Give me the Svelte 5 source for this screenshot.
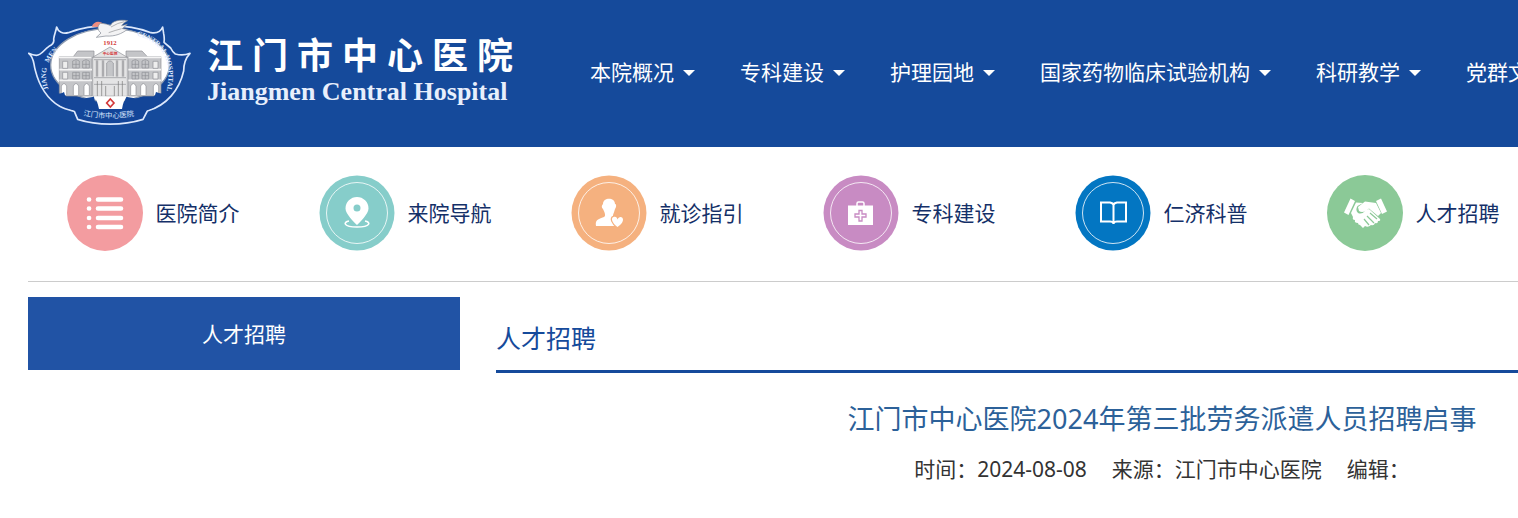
<script lang="ts">
    const nav = ['本院概况', '专科建设', '护理园地', '国家药物临床试验机构', '科研教学', '党群文化'];

    const links = [
        { icon: 'list', label: '医院简介', color: '#f39ca0' },
        { icon: 'pin', label: '来院导航', color: '#86cdca' },
        { icon: 'person', label: '就诊指引', color: '#f5b17f' },
        { icon: 'kit', label: '专科建设', color: '#c88bc3' },
        { icon: 'book', label: '仁济科普', color: '#0376c2' },
        { icon: 'hands', label: '人才招聘', color: '#8bc997' }
    ];

    const wings = [118, 325];
    const windows = [158, 188, 336, 366];
    const arches = [124, 160, 192, 332, 362, 400];
</script>

<div class="page">
    <header>
        <div class="container bar">
            <a class="logo" href="/">
                <svg class="emblem" viewBox="24 24 492 318" aria-hidden="true">
                    <path d="M110 48C108 60 103 70 101 84Q104 98 87 106C71 116 66 132 49 133Q39 133 26 127C43 139 40 158 46 178C58 226 83 264 119 286C135 295 151 298 163 301L173 325C232 344 309 344 369 325L382 300C441 283 478 236 491 180C491 161 497 141 510 127C493 134 480 133 466 129Q458 124 452 111L432 94Q434 82 431 68L428 48C422 62 409 68 393 65C320 37 218 37 145 65C129 70 114 62 110 48Z" fill="#134598" stroke="#dce8fc" stroke-width="5" stroke-linejoin="round" />
                    <ellipse cx="270" cy="162" rx="178" ry="110" fill="#fff" stroke="#8f9cb0" stroke-width="4" />
                    <g fill="#c4c5c8" stroke="#8e9095" stroke-width="2">
                        <path d="M160 137L173 120H222V138ZM318 138V120H366L382 137Z" />
                        {#each wings as x}
                            <path d={`M${x} 137h98v118h-98z`} />
                            <path d={`M${x - 2} 139h102M${x} 176h98M${x} 208h98`} stroke="#f4f4f4" stroke-width="5" />
                        {/each}
                        <path d="M218 139L270 108L322 139V256H218Z" fill="#e4e4e5" />
                        <path d="M214 139H326M222 146H318M222 200H318M222 220H318" />
                        {#each [229, 247, 289, 307] as x}
                            <path d={`M${x} 148v49m4-49v49`} stroke="#7d7f84" />
                        {/each}
                        <path d="M260 196V156Q270 143 280 156V196" />
                        {#each windows as x}
                            <path d={`M${x} 171v-21q10-9 20 0v21zM${x} 204v-20h20v20zM${x + 10} 148v23m0 13v20M${x} 160h20m-20 34h20`} />
                        {/each}
                        {#each arches as x}
                            <path d={`M${x} 252v-27q8-15 16 0v27`} fill="#fff" />
                        {/each}
                        <path d="M232 210V256M245 210V256M257 225V256H283V225M295 210V256M307 210V256" fill="none" stroke="#777" />
                        <path d="M128 151h15v21h-15zM128 184h15v20h-15zM399 151h15v21h-15zM399 184h15v20h-15z" fill="#eee" />
                    </g>
                    <path d="M92 238C108 250 119 250 132 243Q133 254 143 262Q182 266 222 257L229 293H311L317 257Q357 266 397 262Q407 254 408 243C422 250 434 249 448 238C431 277 398 294 371 300C302 315 223 314 168 300C131 291 105 270 92 238Z" fill="#134598" />
                    <path d="M221 256H321C314 264 309 276 306 294H237C233 276 229 264 221 256Z" fill="#fff" />
                    <path d="M271 264L282 276L271 288L260 276Z" fill="#fff" stroke="#d33839" stroke-width="5" />
                    <path d="M215 47C222 30 237 28 251 38L244 49Z" fill="#ee8d80" />
                    <path d="M241 37C256 38 264 40 271 44C277 29 299 25 323 29C315 33 309 37 305 44L322 40L307 53L322 55C306 68 285 77 258 75L229 79L243 66C230 57 233 42 241 37Z" fill="#f3f3f4" stroke="#7e8590" stroke-width="2" />
                    <path d="M273 48Q294 35 313 32M266 65Q285 58 305 53" fill="none" stroke="#b1b2b4" stroke-width="3" />
                    <path id="left-arc" d="M86 235Q51 143 168 76" fill="none" />
                    <path id="right-arc" d="M350 74Q473 105 437 254" fill="none" />
                    <path id="base-arc" d="M190 313Q270 330 350 313" fill="none" />
                    <text class="latin"><textPath href="#left-arc">JIANG&#160;&#160; MEN</textPath></text>
                    <text class="latin"><textPath href="#right-arc">CENTRAL HOSPITAL</textPath></text>
                    <text class="base"><textPath href="#base-arc">江门市中心医院</textPath></text>
                    <text class="year" x="270" y="101">1912</text>
                    <text class="plaque" x="270" y="133">中心医院</text>
                </svg>
                <span class="wordmark">
                    <span class="name">江门市中心医院</span>
                    <span class="english">Jiangmen Central Hospital</span>
                </span>
            </a>
            <nav>
                {#each nav as item}
                    <a href="/">{item}<i class="caret"></i></a>
                {/each}
            </nav>
        </div>
    </header>

    <div class="container">
        <div class="quick">
            {#each links as link}
                <a href="/">
                    <svg viewBox="0 0 76 76" aria-hidden="true">
                        {#if link.icon === 'list' || link.icon === 'hands'}
                            <circle cx="38" cy="38" r="38" fill={link.color} />
                        {:else}
                            <circle cx="38" cy="38" r="37.5" fill={link.color} />
                            <circle cx="38" cy="38" r="30.5" fill="none" stroke="#fff" stroke-opacity=".8" />
                        {/if}
                        {#if link.icon === 'list'}
                            <path d="M31 24.5H54M31 33.5H54M31 43H54M31 52H54" stroke="#fff" stroke-width="4.6" stroke-linecap="round" />
                            <path d="M22 24.5h.1M22 33.5h.1M22 43h.1M22 52h.1" stroke="#fff" stroke-width="4.6" stroke-linecap="round" />
                        {:else if link.icon === 'pin'}
                            <path d="M30 46C24 47 24 52 38 52S52 47 46 46" fill="none" stroke="#fff" stroke-width="1.6" />
                            <path fill-rule="evenodd" d="M38 50C35 47 26.500 39 26.500 33.500a11.500 11.500 0 0 1 23 0C49.500 39 41 47 38 50ZM38 29.500a3.500 3.500 0 1 0 0 7a3.500 3.500 0 0 0 0-7Z" fill="#fff" />
                        {:else if link.icon === 'person'}
                            <path d="M32 29C32 22 44 22 44 29C45 29 46 31 44 34C43 38 42 39 42 41L47 43V51H25C24 45 27 44 33 42C35 41 34 38 32 34C30 32 31 30 32 29Z" fill="#fff" />
                            <path d="M46.500 52C41 48 39.500 43 42.500 42C45 41.200 46 42.500 46.500 44.500C47.500 41.500 51.500 41 52 44.500C52 48 49 50 46.500 52Z" fill="#fff" stroke={link.color} stroke-width="2.600" paint-order="stroke" />
                        {:else if link.icon === 'kit'}
                            <path d="M34 32V28.500Q34 27 35.500 27H39.500Q41 27 41 28.500V32" fill="none" stroke="#fff" stroke-width="1.500" />
                            <rect x="25" y="30.500" width="25" height="19.500" fill="#fff" />
                            <path d="M36 35.500h3v3.500h4v3h-4v4h-3v-4h-4v-3h4z" fill="none" stroke={link.color} stroke-width="1.300" />
                        {:else if link.icon === 'book'}
                            <path d="M26 27.500H35Q38 28 38.500 30Q39 28 42 27.500H51V46.500H42Q39 46.500 38.500 48.500Q38 46.500 35 46.500H26ZM38.500 29V49" fill="none" stroke="#fff" stroke-width="2" />
                        {:else}
                            <path d="M23.500 23.500L28 26L21.500 40L17 37.500ZM49 26L54 23.500L60 36.500L55 39Z" fill="#fff" />
                            <path d="M29 27.500L36 28L30.500 31Q28 35 31 38Q35 40 39 35L42 34L53 44Q54 46 51 46Q51 49 48 48Q47 51 44 50Q41 53 38 51L36 53L33 50Q31 50 31 48Q27 48 28 45Q25 45 26 42L24 38Z" fill="#fff" />
                            <path d="M31 32L38 26.500L49 28L54 38L51 41L42 33.500Q36 39 32 36Z" fill="#fff" />
                            <path d="M43 38L50 44M40 41L47 48M37 44L42 50" stroke={link.color} stroke-width="1.200" />
                        {/if}
                    </svg>
                    <span>{link.label}</span>
                </a>
            {/each}
        </div>

        <div class="content">
            <aside>
                <a href="/">人才招聘</a>
            </aside>
            <main>
                <h2>人才招聘</h2>
                <article>
                    <h1>江门市中心医院2024年第三批劳务派遣人员招聘启事</h1>
                    <div class="meta">
                        <span>时间：2024-08-08</span>
                        <span>来源：江门市中心医院</span>
                        <span>编辑：</span>
                    </div>
                </article>
            </main>
        </div>
    </div>
</div>

<style>
    :global(body) {
        margin: 0;
        overflow-x: hidden;
        background: #fff;
    }
    .page {
        min-width: 1856px;
        font-family: "Noto Sans", "Noto Sans CJK SC", sans-serif;
        font-size: 21px;
        line-height: 30px;
        color: #333;
    }
    a {
        color: inherit;
        text-decoration: none;
    }
    .container {
        margin: 0 28px;
    }
    header {
        background: #154a9b;
        color: #fff;
    }
    .bar {
        display: flex;
        align-items: center;
        height: 147px;
    }
    .logo {
        display: flex;
        align-items: center;
        gap: 15px;
        padding-bottom: 4px;
    }
    .emblem {
        width: 164px;
        height: 106px;
    }
    .latin {
        fill: #dce8ff;
        font-family: "Liberation Serif", serif;
        font-size: 21px;
        font-weight: bold;
    }
    .base {
        fill: #dce8ff;
        font-family: "Noto Sans CJK SC", sans-serif;
        font-size: 22px;
    }
    .year,
    .plaque {
        fill: #d33839;
        font-family: "Liberation Serif", "Noto Sans CJK SC", serif;
        font-size: 20px;
        font-weight: bold;
        text-anchor: middle;
    }
    .plaque {
        font-size: 11px;
    }
    .wordmark {
        display: flex;
        flex-direction: column;
        width: 306px;
    }
    .name {
        font-size: 36px;
        font-weight: bold;
        line-height: 40px;
        text-align: justify;
        text-align-last: justify;
    }
    .english {
        color: #e8effc;
        font-family: "Liberation Serif", serif;
        font-size: 26px;
        font-weight: bold;
        line-height: 32px;
        white-space: nowrap;
    }
    nav {
        display: flex;
        gap: 45px;
        margin-left: 77px;
        padding-bottom: 4px;
    }
    nav a {
        display: flex;
        align-items: center;
        gap: 9px;
        white-space: nowrap;
    }
    .caret {
        margin-top: 3px;
        border: 6px solid transparent;
        border-top-color: #fff;
        border-bottom: 0;
    }
    .quick {
        display: flex;
        padding: 28px 0 30px;
        border-bottom: 1px solid #ccc;
    }
    .quick a {
        display: flex;
        align-items: center;
        justify-content: center;
        gap: 13px;
        box-sizing: border-box;
        width: 14%;
        padding-right: 2px;
        color: #143068;
    }
    .quick svg {
        width: 76px;
        height: 76px;
    }
    .content {
        display: flex;
        justify-content: space-between;
        margin-top: 15px;
    }
    aside {
        width: 24%;
    }
    aside a {
        display: block;
        padding: 22px 0 21px;
        background: #2153a5;
        color: #fff;
        text-align: center;
    }
    main {
        width: 74%;
    }
    h1,
    h2 {
        margin: 0;
        font-weight: normal;
    }
    h2 {
        padding: 21px 0 12px;
        border-bottom: 3px solid #154a9b;
        color: #154a9b;
        font-size: 25px;
        line-height: 40px;
    }
    article {
        padding-top: 26px;
        text-align: center;
    }
    h1 {
        color: #2c6199;
        font-size: 27px;
        line-height: 40px;
    }
    .meta {
        display: flex;
        justify-content: center;
        gap: 25px;
        margin-top: 15px;
    }
</style>
